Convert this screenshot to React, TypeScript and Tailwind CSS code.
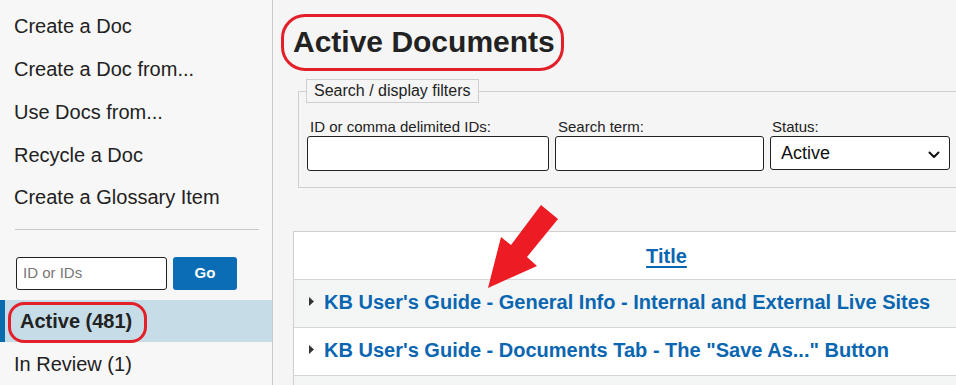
import React from "react";

const font = { fontFamily: '"Liberation Sans", Arial, sans-serif' };

function Chevron() {
  return (
    <svg width="12" height="8" viewBox="0 0 12 8" className="absolute right-[9px] top-[14px]">
      <path d="M1.5 1.5 L6 6 L10.5 1.5" fill="none" stroke="#111" strokeWidth="2" strokeLinecap="round" strokeLinejoin="round" />
    </svg>
  );
}

function Tri() {
  return (
    <svg width="5" height="9" viewBox="0 0 5 9" className="shrink-0">
      <path d="M0 0 L5 4.5 L0 9 Z" fill="#333" />
    </svg>
  );
}

export default function App() {
  const sideItems = ["Create a Doc", "Create a Doc from...", "Use Docs from...", "Recycle a Doc", "Create a Glossary Item"];
  return (
    <div className="relative w-[956px] h-[385px] overflow-hidden flex bg-[#f5f5f5] text-[#222]" style={font}>
      {/* Sidebar */}
      <div className="w-[273px] shrink-0 bg-[#f7f7f7] border-r border-[#c9c9c9] flex flex-col pt-[5px]">
        {sideItems.map((t) => (
          <div key={t} className="h-[43px] flex items-center pl-[14px] text-[20px] text-[#222]">
            {t}
          </div>
        ))}
        <div className="mt-[10px] ml-[15px] w-[244px] h-px bg-[#c8c8c8]" />
        <div className="mt-[27px] ml-[16px] flex gap-[6px]">
          <div className="w-[151px] h-[33px] border border-[#222] rounded-[3px] bg-white flex items-center pl-[6px] text-[15px] text-[#777]">
            ID or IDs
          </div>
          <div className="w-[64px] h-[33px] rounded-[3px] bg-[#0a6db5] flex items-center justify-center text-white font-bold text-[15px]">
            Go
          </div>
        </div>
        <div className="mt-[10px] h-[43px] flex items-center bg-[#c6dce6] border-l-[5px] border-[#0a6aae] pl-[15px] font-bold text-[20px] text-[#222]">
          Active (481)
        </div>
        <div className="h-[43px] flex items-center pl-[14px] text-[20px] text-[#222]">In Review (1)</div>
      </div>

      {/* Main */}
      <div className="flex-1 pl-[20px] pt-[25px] min-w-0">
        <h1 className="text-[30px] font-bold leading-[34px] text-[#222] whitespace-nowrap">Active Documents</h1>
        <fieldset className="mt-[20px] ml-[5px] w-[720px] border border-[#cfcfcf] pl-[8px] pr-[8px] pb-[16px]">
          <legend className="border border-[#cfcfcf] px-[7px] h-[24px] leading-[22px] text-[16px] text-[#222] -ml-px">
            Search / display filters
          </legend>
          <div className="flex gap-[6px] mt-[15px]">
            <div className="flex flex-col">
              <div className="text-[15px] leading-[17px] pl-[3px] text-[#222]">ID or comma delimited IDs:</div>
              <div className="mt-[1px] w-[242px] h-[35px] border border-[#222] rounded-[3px] bg-white" />
            </div>
            <div className="flex flex-col">
              <div className="text-[15px] leading-[17px] pl-[3px] text-[#222]">Search term:</div>
              <div className="mt-[1px] w-[209px] h-[35px] border border-[#222] rounded-[3px] bg-white" />
            </div>
            <div className="flex flex-col">
              <div className="text-[15px] leading-[17px] pl-[2px] text-[#222]">Status:</div>
              <div className="relative mt-[1px] w-[180px] h-[34px] border border-[#222] rounded-[3px] bg-white flex items-center pl-[10px] text-[18px] text-[#111]">
                Active
                <Chevron />
              </div>
            </div>
          </div>
        </fieldset>

        <div className="mt-[43px] w-[746px] border-l border-t border-[#d0d0d0]">
          <div className="h-[48px] bg-white border-b border-[#d6d6d6] flex items-center justify-center">
            <span className="text-[20px] font-bold text-[#0a66b0] underline underline-offset-[3px]">Title</span>
          </div>
          <div className="h-[48px] bg-[#f4f6f6] border-b border-[#d6d6d6] flex items-center pl-[15px] pb-[4px] gap-[10px]">
            <Tri />
            <span className="text-[20px] font-bold text-[#0a66b0] whitespace-nowrap">
              KB User's Guide - General Info - Internal and External Live Sites
            </span>
          </div>
          <div className="h-[48px] bg-white border-b border-[#d6d6d6] flex items-center pl-[15px] pb-[4px] gap-[10px]">
            <Tri />
            <span className="text-[20px] font-bold text-[#0a66b0] whitespace-nowrap">
              KB User's Guide - Documents Tab - The "Save As..." Button
            </span>
          </div>
          <div className="h-[48px] bg-[#f4f6f6]" />
        </div>
      </div>

      {/* Annotations */}
      <div className="absolute left-[281px] top-[14px] w-[283px] h-[57px] border-[3px] border-[#e3202a] rounded-[24px] pointer-events-none" />
      <div className="absolute left-[8px] top-[302px] w-[139px] h-[41px] border-[3px] border-[#e3202a] rounded-[16px] pointer-events-none" />
      <svg className="absolute left-0 top-0 pointer-events-none" width="956" height="385">
        <polygon points="541,205 558,219 527,257 537,266 488,288 501,237 511,245" fill="#ed1c24" />
      </svg>
    </div>
  );
}
